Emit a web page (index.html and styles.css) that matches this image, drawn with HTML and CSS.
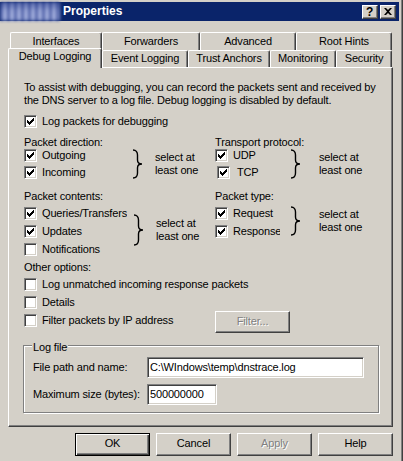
FILE: index.html
```html
<!DOCTYPE html>
<html>
<head>
<meta charset="utf-8">
<title>Properties</title>
<link rel="stylesheet" href="styles.css">
</head>
<body>
<div class="window">
  <div class="titlebar">
    <div class="blur"></div>
    <span class="title">Properties</span>
    <div class="tbtns">
      <span class="tbtn help">?</span>
      <span class="tbtn"><svg width="8" height="7" viewBox="0 0 8 7"><path d="M0 0h2l2 2 2-2h2l-3 3.5 3 3.5h-2l-2-2-2 2h-2l3-3.5z" fill="#000"/></svg></span>
    </div>
  </div>

  <div class="tabs">
    <div class="tabrow back">
      <div class="tab w92">Interfaces</div>
      <div class="tab w98">Forwarders</div>
      <div class="tab w96">Advanced</div>
      <div class="tab w96">Root Hints</div>
    </div>
    <div class="tabrow front">
      <div class="tab sel w94">Debug Logging</div>
      <div class="tab w86">Event Logging</div>
      <div class="tab w82">Trust Anchors</div>
      <div class="tab w66">Monitoring</div>
      <div class="tab w56">Security</div>
    </div>
  </div>

  <div class="panel">
    <p class="desc">To assist with debugging, you can record the packets sent and received by<br>the DNS server to a log file. Debug logging is disabled by default.</p>
    <div class="opt first"><span class="cb on"><svg width="7" height="7" viewBox="0 0 7 7"><path d="M0 2h1v1h1v1h1v-1h1v-1h1v-1h1v-1h1v3h-1v1h-1v1h-1v1h-1v1h-1v-1h-1v-1h-1z"/></svg></span><span>Log packets for debugging</span></div>

    <div class="cols">
      <div class="col left">
        <div class="lbl">Packet direction:</div>
        <div class="group">
          <div class="checks c2 wl">
            <div class="opt"><span class="cb on"><svg width="7" height="7" viewBox="0 0 7 7"><path d="M0 2h1v1h1v1h1v-1h1v-1h1v-1h1v-1h1v3h-1v1h-1v1h-1v1h-1v1h-1v-1h-1v-1h-1z"/></svg></span><span>Outgoing</span></div>
            <div class="opt"><span class="cb on"><svg width="7" height="7" viewBox="0 0 7 7"><path d="M0 2h1v1h1v1h1v-1h1v-1h1v-1h1v-1h1v3h-1v1h-1v1h-1v1h-1v1h-1v-1h-1v-1h-1z"/></svg></span><span>Incoming</span></div>
          </div>
          <svg class="brace" width="11" height="30" viewBox="0 0 11 30"><path d="M1 1C4 1 5.5 3 5.5 6L5.5 11C5.5 14 7 15 10 15C7 15 5.5 16 5.5 19L5.5 24C5.5 27 4 29 1 29" fill="none" stroke="#000" stroke-width="1.4"/></svg>
          <div class="sel-text">select at<br>least one</div>
        </div>

        <div class="lbl mt">Packet contents:</div>
        <div class="group">
          <div class="checks c3 wl">
            <div class="opt"><span class="cb on"><svg width="7" height="7" viewBox="0 0 7 7"><path d="M0 2h1v1h1v1h1v-1h1v-1h1v-1h1v-1h1v3h-1v1h-1v1h-1v1h-1v1h-1v-1h-1v-1h-1z"/></svg></span><span class="clip cq">Queries/Transfers</span></div>
            <div class="opt"><span class="cb on"><svg width="7" height="7" viewBox="0 0 7 7"><path d="M0 2h1v1h1v1h1v-1h1v-1h1v-1h1v-1h1v3h-1v1h-1v1h-1v1h-1v1h-1v-1h-1v-1h-1z"/></svg></span><span>Updates</span></div>
            <div class="opt"><span class="cb"></span><span>Notifications</span></div>
          </div>
          <svg class="brace b2" width="11" height="32" viewBox="0 0 11 32"><path d="M1 1C4 1 5.5 3 5.5 6L5.5 12C5.5 15 7 16 10 16C7 16 5.5 17 5.5 20L5.5 26C5.5 29 4 31 1 31" fill="none" stroke="#000" stroke-width="1.4"/></svg>
          <div class="sel-text">select at<br>least one</div>
        </div>
      </div>

      <div class="col right">
        <div class="lbl">Transport protocol:</div>
        <div class="group">
          <div class="checks c2 wr">
            <div class="opt"><span class="cb on"><svg width="7" height="7" viewBox="0 0 7 7"><path d="M0 2h1v1h1v1h1v-1h1v-1h1v-1h1v-1h1v3h-1v1h-1v1h-1v1h-1v1h-1v-1h-1v-1h-1z"/></svg></span><span>UDP</span></div>
            <div class="opt shift"><span class="cb on"><svg width="7" height="7" viewBox="0 0 7 7"><path d="M0 2h1v1h1v1h1v-1h1v-1h1v-1h1v-1h1v3h-1v1h-1v1h-1v1h-1v1h-1v-1h-1v-1h-1z"/></svg></span><span>TCP</span></div>
          </div>
          <svg class="brace br" width="11" height="30" viewBox="0 0 11 30"><path d="M1 1C4 1 5.5 3 5.5 6L5.5 11C5.5 14 7 15 10 15C7 15 5.5 16 5.5 19L5.5 24C5.5 27 4 29 1 29" fill="none" stroke="#000" stroke-width="1.4"/></svg>
          <div class="sel-text">select at<br>least one</div>
        </div>

        <div class="lbl mt">Packet type:</div>
        <div class="group">
          <div class="checks c2 wr">
            <div class="opt"><span class="cb on"><svg width="7" height="7" viewBox="0 0 7 7"><path d="M0 2h1v1h1v1h1v-1h1v-1h1v-1h1v-1h1v3h-1v1h-1v1h-1v1h-1v1h-1v-1h-1v-1h-1z"/></svg></span><span>Request</span></div>
            <div class="opt"><span class="cb on"><svg width="7" height="7" viewBox="0 0 7 7"><path d="M0 2h1v1h1v1h1v-1h1v-1h1v-1h1v-1h1v3h-1v1h-1v1h-1v1h-1v1h-1v-1h-1v-1h-1z"/></svg></span><span class="clip cr">Response</span></div>
          </div>
          <svg class="brace br" width="11" height="30" viewBox="0 0 11 30"><path d="M1 1C4 1 5.5 3 5.5 6L5.5 11C5.5 14 7 15 10 15C7 15 5.5 16 5.5 19L5.5 24C5.5 27 4 29 1 29" fill="none" stroke="#000" stroke-width="1.4"/></svg>
          <div class="sel-text">select at<br>least one</div>
        </div>
      </div>
    </div>

    <div class="lbl other">Other options:</div>
    <div class="others">
      <div class="opt"><span class="cb"></span><span>Log unmatched incoming response packets</span></div>
      <div class="opt"><span class="cb"></span><span>Details</span></div>
      <div class="filter-row">
        <div class="opt fopt"><span class="cb"></span><span>Filter packets by IP address</span></div>
        <div class="btn disabled fbtn">Filter...</div>
      </div>
    </div>

    <div class="groupbox">
      <div class="legend">Log file</div>
      <div class="field first-field">
        <span class="flabel">File path and name:</span>
        <span class="input wide">C:\WIndows\temp\dnstrace.log</span>
      </div>
      <div class="field">
        <span class="flabel">Maximum size (bytes):</span>
        <span class="input narrow">500000000</span>
      </div>
    </div>
  </div>

  <div class="buttons">
    <div class="btn default">OK</div>
    <div class="btn">Cancel</div>
    <div class="btn disabled">Apply</div>
    <div class="btn">Help</div>
  </div>
</div>
</body>
</html>
```

FILE: styles.css
```css
* { box-sizing: border-box; margin: 0; padding: 0; }
html, body { width: 403px; height: 461px; overflow: hidden; }
body {
  background: #d4d0c8;
  font-family: "Liberation Sans", Arial, sans-serif;
  font-size: 11px;
  line-height: 13px;
  letter-spacing: -0.15px;
  color: #000;
}
.window {
  width: 403px;
  height: 461px;
  padding-top: 2px;
  display: flex;
  flex-direction: column;
  box-shadow: inset -1px 0 #404040, inset -2px 0 #808080;
}

/* title bar */
.titlebar {
  width: 399px;
  height: 19px;
  background: #0a246a;
  display: flex;
  align-items: center;
  flex: none;
}
.blur {
  width: 60px;
  height: 19px;
  background:
    repeating-linear-gradient(90deg, rgba(40,60,140,0.55) 0 3px, rgba(200,210,240,0.2) 3px 7px),
    linear-gradient(#3c4f98, #8d9ad0 45%, #9aa6d8 80%, #6c7cb8);
  filter: blur(1.6px);
}
.title {
  color: #fff;
  font-weight: bold;
  font-size: 12px;
  letter-spacing: 0;
  margin-left: 3px;
}
.tbtns {
  margin-left: auto;
  margin-right: 3px;
  display: flex;
  gap: 2px;
}
.tbtn {
  width: 16px;
  height: 14px;
  background: #d4d0c8;
  border: 1px solid;
  border-color: #fff #404040 #404040 #fff;
  box-shadow: inset -1px -1px #808080;
  display: flex;
  align-items: center;
  justify-content: center;
  font-weight: bold;
  font-size: 12px;
  line-height: 12px;
}
.tbtn.help { padding-right: 1px; }

/* tabs */
.tabs { margin-top: 11px; flex: none; }
.tabrow { display: flex; align-items: flex-start; }
.back { margin-left: 10px; height: 18px; }
.front { margin-left: 8px; height: 17px; }
.tab {
  height: 18px;
  padding-top: 2px;
  text-align: center;
  white-space: nowrap;
  background: #d4d0c8;
  border-top: 1px solid #fff;
  border-left: 1px solid #fff;
  border-right: 1px solid #404040;
  border-radius: 2px 2px 0 0;
  box-shadow: inset -1px 0 #808080;
}
.front .tab { height: 17px; padding-top: 1px; }
.front .tab.sel {
  height: 20px;
  margin-top: -2px;
  position: relative;
  z-index: 2;
}
.w92 { width: 92px; }
.w98 { width: 98px; }
.w96 { width: 96px; }
.w94 { width: 94px; }
.w86 { width: 86px; }
.w82 { width: 82px; }
.w66 { width: 66px; }
.w56 { width: 56px; }

/* panel */
.panel {
  margin-left: 8px;
  width: 385px;
  height: 360px;
  flex: none;
  padding: 13px 0 0 15px;
  border-top: 1px solid #fff;
  border-left: 1px solid #fff;
  border-right: 1px solid #404040;
  border-bottom: 1px solid #404040;
  box-shadow: inset -1px -1px #808080;
}
.desc { white-space: nowrap; }
.opt {
  display: flex;
  align-items: center;
  height: 13px;
  gap: 5px;
  white-space: nowrap;
}
.opt.first { margin-top: 8px; }
.cb {
  width: 13px;
  height: 13px;
  flex: none;
  background: #fff;
  border: 1px solid;
  border-color: #808080 #fff #fff #808080;
  box-shadow: inset 1px 1px #404040, inset -1px -1px #d4d0c8;
  padding: 2px 0 0 2px;
  display: flex;
}
.cb svg { display: block; fill: #000; }

.cols { display: flex; margin-top: 8px; }
.col.left { width: 191px; }
.lbl { height: 13px; white-space: nowrap; }
.lbl.mt { margin-top: 11px; }
.group { display: flex; align-items: center; }
.checks { display: flex; flex-direction: column; }
.checks.c2 { gap: 4px; }
.checks.c3 { gap: 5px; margin-top: 4px; }
.right .lbl.mt + .group .checks { margin-top: 4px; gap: 5px; }
.wl { width: 108px; }
.wr { width: 75px; }
.opt.shift { padding-left: 2px; gap: 7px; }
.brace { flex: none; }
.brace.b2 { margin-left: 1px; }
.sel-text { margin-left: 12px; white-space: nowrap; }
.br + .sel-text { margin-left: 18px; }
.clip { overflow: hidden; }
.clip.cq { width: 85px; }
.clip.cr { width: 47px; }

.lbl.other { margin-top: 5px; }
.others { display: flex; flex-direction: column; gap: 5px; margin-top: 4px; }
.filter-row { display: flex; align-items: flex-start; height: 13px; }
.fopt { width: 191px; }

/* buttons */
.btn {
  width: 75px;
  height: 23px;
  padding-bottom: 2px;
  display: flex;
  align-items: center;
  justify-content: center;
  background: #d4d0c8;
  border: 1px solid;
  border-color: #fff #404040 #404040 #fff;
  box-shadow: inset -1px -1px #808080;
  flex: none;
}
.btn.default {
  border-color: #000;
  box-shadow: inset 1px 1px #fff, inset -1px -1px #404040, inset -2px -2px #808080;
}
.btn.disabled { color: #808080; text-shadow: 1px 1px #fff; }
.fbtn { height: 22px; margin-top: -3px; }

/* group box */
.groupbox {
  margin-top: 18px;
  margin-left: -1px;
  width: 356px;
  height: 68px;
  border: 1px solid #808080;
  box-shadow: inset 1px 1px #fff, 1px 1px #fff;
  padding-left: 8px;
}
.legend {
  width: fit-content;
  margin-top: -5px;
  padding: 0 1px;
  background: #d4d0c8;
}
.field { display: flex; align-items: center; height: 21px; margin-top: 6px; padding-left: 1px; }
.field.first-field { margin-top: 3px; }
.flabel { width: 114px; white-space: nowrap; }
.input {
  height: 21px;
  background: #fff;
  border: 1px solid;
  border-color: #808080 #fff #fff #808080;
  box-shadow: inset 1px 1px #404040, inset -1px -1px #d4d0c8;
  padding-left: 2px;
  display: flex;
  align-items: center;
  white-space: nowrap;
}
.input.wide { width: 217px; }
.input.narrow { width: 70px; }

.buttons {
  display: flex;
  justify-content: flex-end;
  gap: 6px;
  margin-top: 6px;
  padding-right: 10px;
  flex: none;
}
```
